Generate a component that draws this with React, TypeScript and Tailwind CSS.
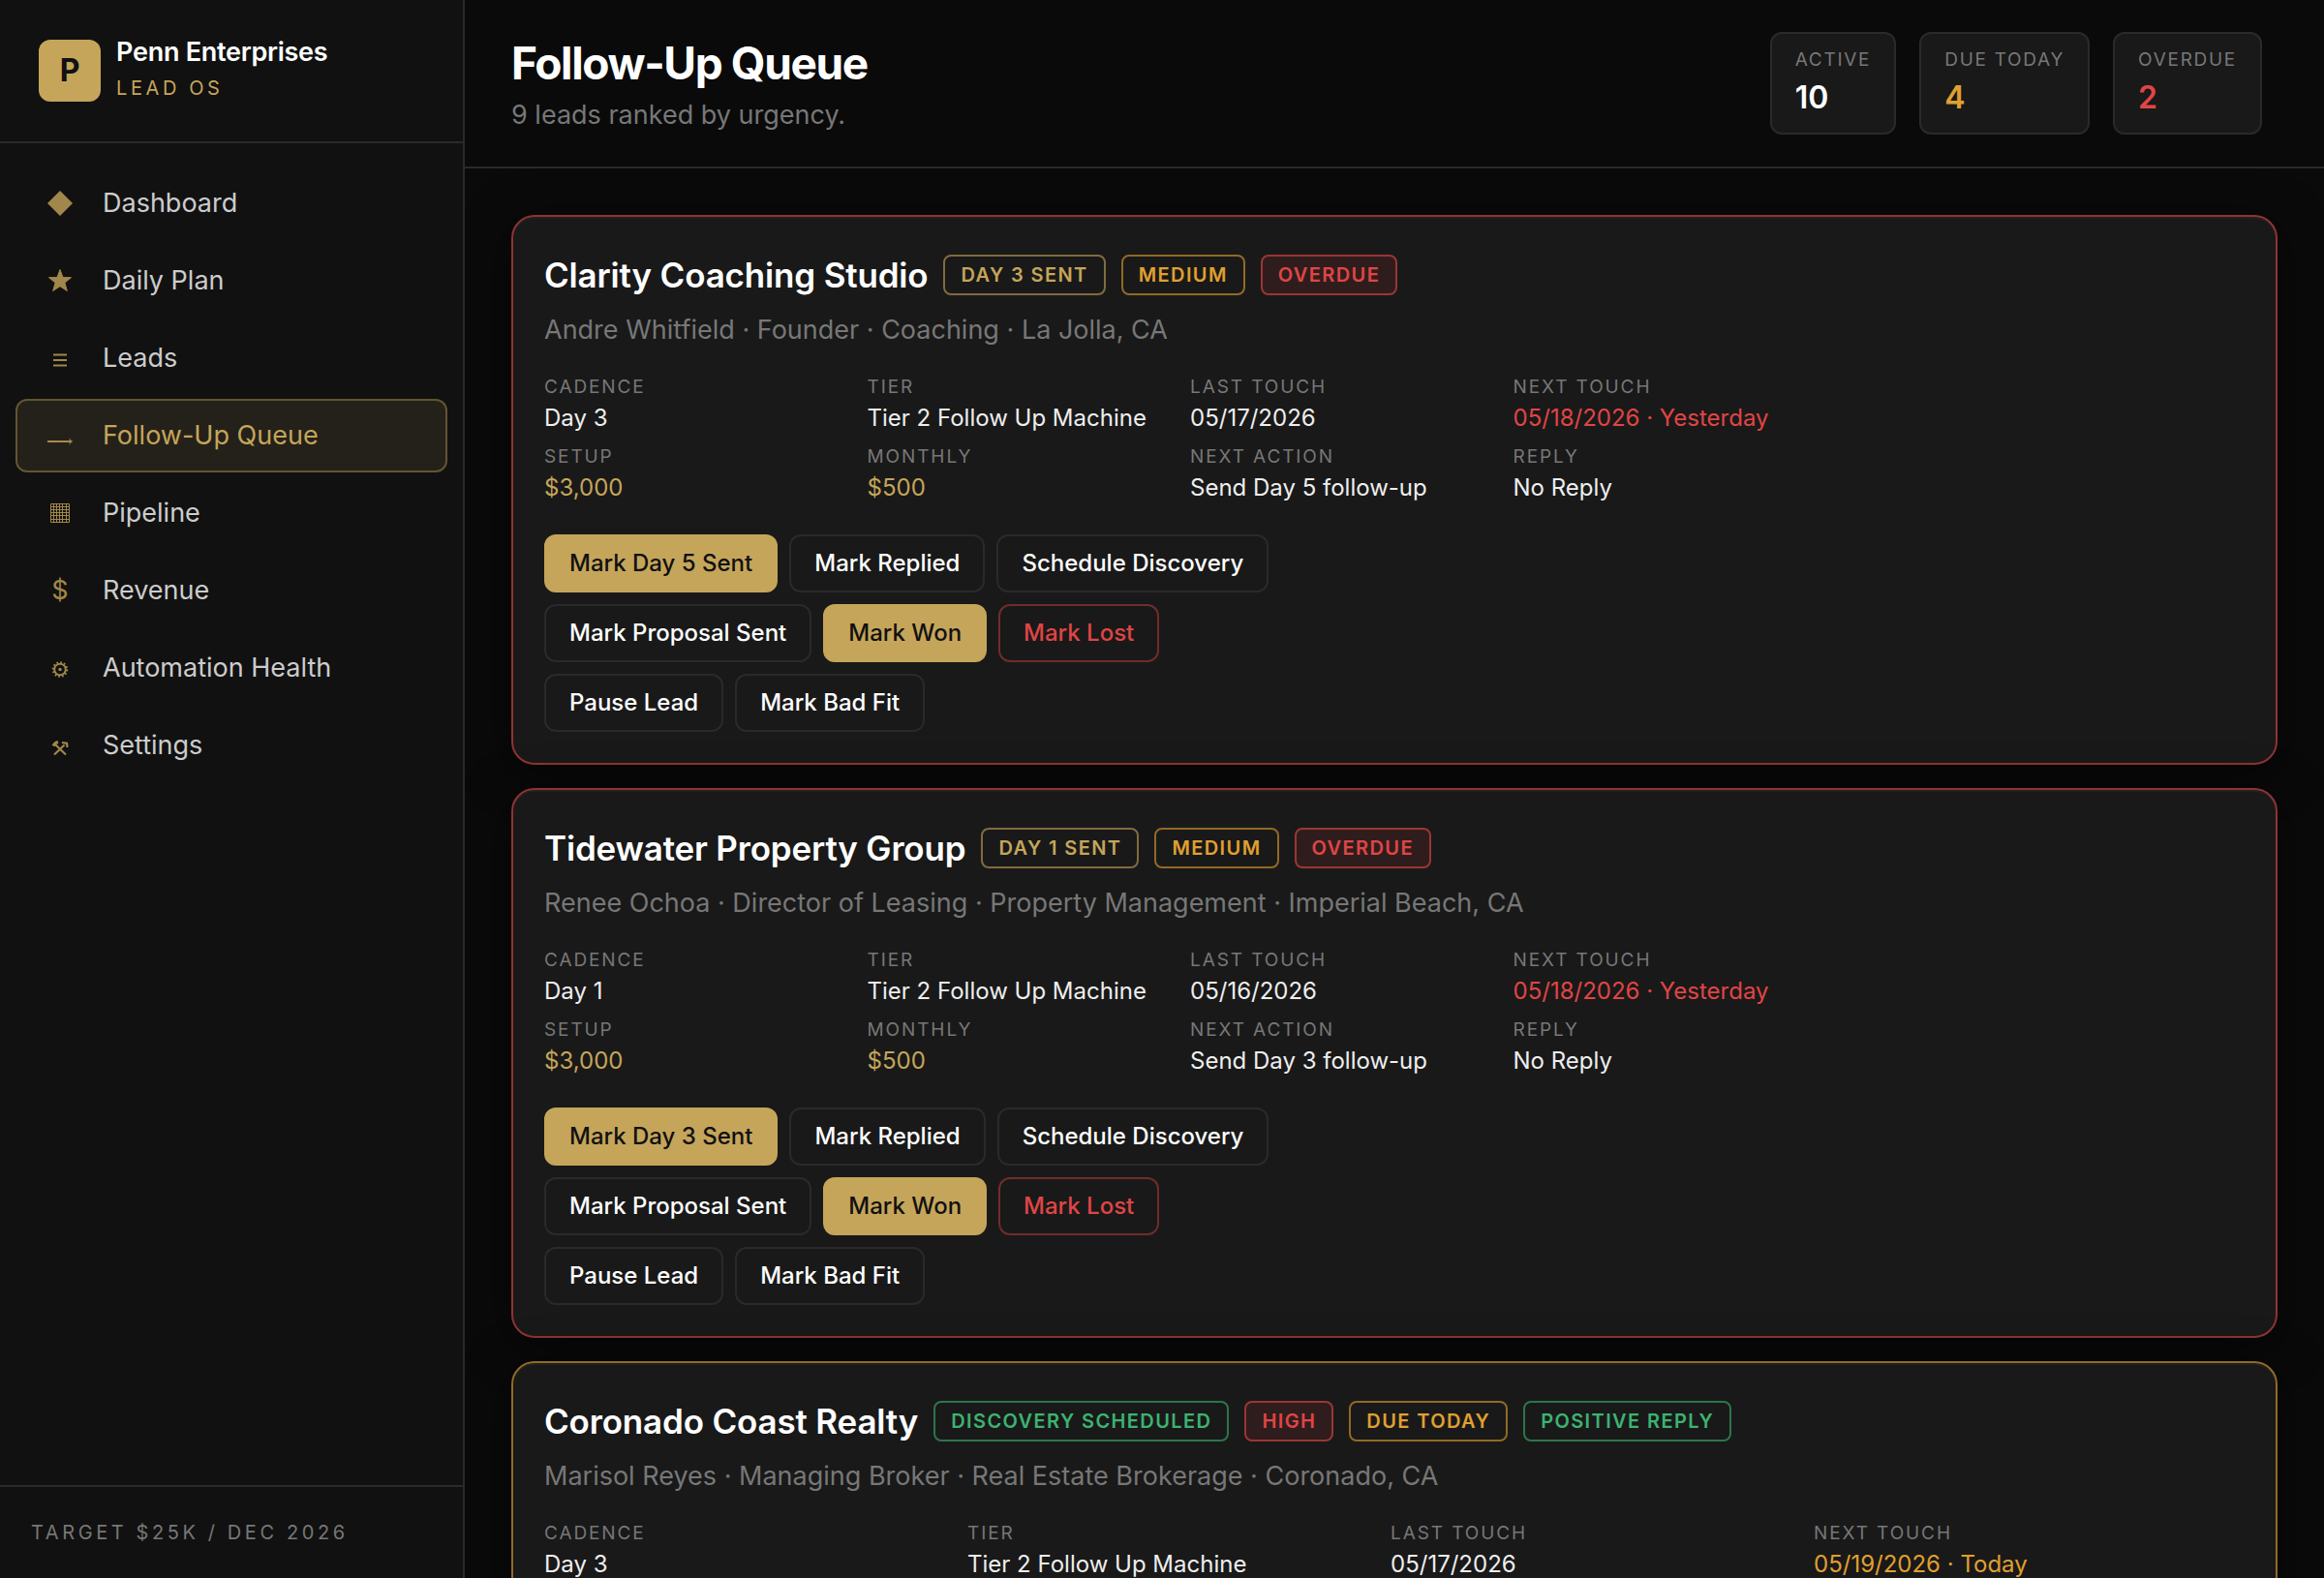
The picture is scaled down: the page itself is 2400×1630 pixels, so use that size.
import type { ReactNode } from "react";

type Tone = "gold" | "amber" | "red" | "green";
type ButtonKind = "primary" | "ghost" | "danger";

interface Badge {
  label: string;
  tone: Tone;
}

interface Detail {
  label: string;
  value: string;
  color?: string;
}

interface Lead {
  name: string;
  meta: string;
  badges: Badge[];
  details: Detail[];
  nextDay: string;
  border: string;
  gridWidth: string;
}

const navItems: { label: string; icon: ReactNode }[] = [
  { label: "Dashboard", icon: <path d="M20 7 33 20 20 33 7 20Z" fill="currentColor" /> },
  {
    label: "Daily Plan",
    icon: (
      <path
        d="M20 8.500 23 16.500 31.500 16.700 24.900 22 27.300 30.500 20 25.700 12.700 30.500 15.100 22 8.500 16.700 17 16.500Z"
        fill="currentColor"
        stroke="currentColor"
        strokeWidth="1"
        strokeLinejoin="round"
      />
    ),
  },
  {
    label: "Leads",
    icon: <path d="M13 16.500h14M13 22h14M13 27.500h14" stroke="currentColor" strokeWidth="2" />,
  },
  {
    label: "Follow-Up Queue",
    icon: (
      <>
        <path d="M7 26h23" stroke="currentColor" strokeWidth="2" />
        <path d="M29.500 22c.8 2 2 3.300 3.800 4-1.800.7-3 2-3.800 4l.5-4z" fill="currentColor" />
      </>
    ),
  },
  {
    label: "Pipeline",
    icon: (
      <path
        d="M10.500 10.500h19v19h-19zM13.500 10v20M16.500 10v20M19.500 10v20M22.500 10v20M26.500 10v20M10 13.500h20M10 16.500h20M10 19.500h20M10 22.500h20M10 26.500h20"
        stroke="currentColor"
        strokeWidth="1"
      />
    ),
  },
  { label: "Revenue", icon: null },
  {
    label: "Automation Health",
    icon: (
      <g stroke="currentColor">
        <circle cx="20" cy="21.500" r="5.800" strokeWidth="2" />
        <circle cx="20" cy="21.500" r="7.300" strokeWidth="2" strokeDasharray="1.700 2.122" />
        <circle cx="20" cy="21.500" r="1.700" fill="currentColor" stroke="none" />
      </g>
    ),
  },
  {
    label: "Settings",
    icon: (
      <g stroke="currentColor" strokeWidth="2.200">
        <path d="M15 19l11 10.500M24.500 19.500L14 29.500" />
        <path d="M13 20.500c1-2 2.500-3.500 5-4" strokeWidth="3" />
        <path d="M22 17l5 .8.500 4.200" />
      </g>
    ),
  },
];

const stats = [
  { label: "Active", value: "10", color: "text-white" },
  { label: "Due Today", value: "4", color: "text-[#e0a030]" },
  { label: "Overdue", value: "2", color: "text-[#e04545]" },
];

const leads: Lead[] = [
  {
    name: "Clarity Coaching Studio",
    meta: "Andre Whitfield · Founder · Coaching · La Jolla, CA",
    badges: [
      { label: "Day 3 Sent", tone: "gold" },
      { label: "Medium", tone: "amber" },
      { label: "Overdue", tone: "red" },
    ],
    details: [
      { label: "Cadence", value: "Day 3" },
      { label: "Tier", value: "Tier 2 Follow Up Machine" },
      { label: "Last Touch", value: "05/17/2026" },
      { label: "Next Touch", value: "05/18/2026 · Yesterday", color: "text-[#e04545]" },
      { label: "Setup", value: "$3,000", color: "text-[#c5a55a]" },
      { label: "Monthly", value: "$500", color: "text-[#c5a55a]" },
      { label: "Next Action", value: "Send Day 5 follow-up" },
      { label: "Reply", value: "No Reply" },
    ],
    nextDay: "Mark Day 5 Sent",
    border: "border-[#903333]",
    gridWidth: "max-w-[1310px]",
  },
  {
    name: "Tidewater Property Group",
    meta: "Renee Ochoa · Director of Leasing · Property Management · Imperial Beach, CA",
    badges: [
      { label: "Day 1 Sent", tone: "gold" },
      { label: "Medium", tone: "amber" },
      { label: "Overdue", tone: "red" },
    ],
    details: [
      { label: "Cadence", value: "Day 1" },
      { label: "Tier", value: "Tier 2 Follow Up Machine" },
      { label: "Last Touch", value: "05/16/2026" },
      { label: "Next Touch", value: "05/18/2026 · Yesterday", color: "text-[#e04545]" },
      { label: "Setup", value: "$3,000", color: "text-[#c5a55a]" },
      { label: "Monthly", value: "$500", color: "text-[#c5a55a]" },
      { label: "Next Action", value: "Send Day 3 follow-up" },
      { label: "Reply", value: "No Reply" },
    ],
    nextDay: "Mark Day 3 Sent",
    border: "border-[#903333]",
    gridWidth: "max-w-[1310px]",
  },
  {
    name: "Coronado Coast Realty",
    meta: "Marisol Reyes · Managing Broker · Real Estate Brokerage · Coronado, CA",
    badges: [
      { label: "Discovery Scheduled", tone: "green" },
      { label: "High", tone: "red" },
      { label: "Due Today", tone: "amber" },
      { label: "Positive Reply", tone: "green" },
    ],
    details: [
      { label: "Cadence", value: "Day 3" },
      { label: "Tier", value: "Tier 2 Follow Up Machine" },
      { label: "Last Touch", value: "05/17/2026" },
      { label: "Next Touch", value: "05/19/2026 · Today", color: "text-[#e0a030]" },
    ],
    nextDay: "Mark Day 5 Sent",
    border: "border-[#916a25]",
    gridWidth: "max-w-[1724px]",
  },
];

const badgeTones: Record<Tone, string> = {
  gold: "border-[#7f6c3f] text-[#c5a55a]",
  amber: "border-[#916a25] text-[#e0a030]",
  red: "border-[#9c3535] bg-[#2f1d1d] text-[#e04545]",
  green: "border-[#2d7549] text-[#3cb371]",
};

const buttonKinds: Record<ButtonKind, string> = {
  primary: "border-[#c5a55a] bg-[#c5a55a] text-[#111111]",
  ghost: "border-[#2a2a2a] text-white",
  danger: "border-[#702c2c] text-[#e04545]",
};

function Sidebar() {
  return (
    <aside className="flex w-[480px] shrink-0 flex-col border-r-2 border-[#2a2a2a] bg-[#111111]">
      <div className="flex items-center gap-4 border-b-2 border-[#2a2a2a] px-10 py-9">
        <div className="flex size-16 items-center justify-center rounded-xl bg-[#c5a55a] text-[32px] font-bold text-[#111111]">
          P
        </div>
        <div>
          <div className="text-[27px] leading-[36px] font-semibold tracking-[-0.01em] text-white">
            Penn Enterprises
          </div>
          <div className="text-[20px] leading-[38px] tracking-[0.18em] text-[#c5a55a] uppercase">Lead OS</div>
        </div>
      </div>

      <nav className="flex flex-1 flex-col gap-1 px-4 py-6">
        {navItems.map((item) => {
          const active = item.label === "Follow-Up Queue";
          return (
            <a
              key={item.label}
              href="#"
              aria-current={active ? "page" : undefined}
              className={`flex h-[76px] items-center gap-6 rounded-xl border-2 px-6 text-[27px] ${
                active
                  ? "border-[#645430] bg-[#24211a] text-[#c5a55a]"
                  : "border-transparent text-[#cccccc]"
              }`}
            >
              <span className="flex size-10 items-center justify-center text-[#c5a55a] opacity-80">
                {item.icon ? (
                  <svg viewBox="0 0 40 40" className="size-10" fill="none">
                    {item.icon}
                  </svg>
                ) : (
                  "$"
                )}
              </span>
              {item.label}
            </a>
          );
        })}
      </nav>

      <div className="border-t-2 border-[#2a2a2a] px-8 py-8 text-[20px] leading-[30px] tracking-[0.18em] text-[#777777] uppercase">
        Target $25K / Dec 2026
      </div>
    </aside>
  );
}

function LeadCard({ lead }: { lead: Lead }) {
  const actions: { label: string; kind: ButtonKind }[] = [
    { label: lead.nextDay, kind: "primary" },
    { label: "Mark Replied", kind: "ghost" },
    { label: "Schedule Discovery", kind: "ghost" },
    { label: "Mark Proposal Sent", kind: "ghost" },
    { label: "Mark Won", kind: "primary" },
    { label: "Mark Lost", kind: "danger" },
    { label: "Pause Lead", kind: "ghost" },
    { label: "Mark Bad Fit", kind: "ghost" },
  ];

  return (
    <article
      className={`shrink-0 rounded-3xl border-2 bg-[#191919] p-8 shadow-[0_8px_48px_rgba(0,0,0,0.5),inset_0_2px_0_rgba(255,255,255,0.03)] ${lead.border}`}
    >
      <div className="flex flex-wrap items-center gap-4">
        <h2 className="text-[35px] leading-[56px] font-semibold tracking-[-0.005em] text-white">{lead.name}</h2>
        {lead.badges.map((badge) => (
          <span
            key={badge.label}
            className={`rounded-lg border-2 px-4 text-[20px] leading-[38px] font-semibold tracking-[0.07em] uppercase ${badgeTones[badge.tone]}`}
          >
            {badge.label}
          </span>
        ))}
      </div>
      <p className="mt-2 text-[27px] leading-[42px] text-[#777777]">{lead.meta}</p>

      <dl className={`mt-6 grid grid-cols-4 gap-x-6 gap-y-2 ${lead.gridWidth}`}>
        {lead.details.map((detail) => (
          <div key={detail.label}>
            <dt className="text-[19px] leading-[28px] tracking-[0.1em] text-[#777777] uppercase">
              {detail.label}
            </dt>
            <dd className={`text-[24px] leading-[36px] ${detail.color ?? "text-[#eeeeee]"}`}>{detail.value}</dd>
          </div>
        ))}
      </dl>

      <div className="mt-[30px] flex max-w-[760px] flex-wrap gap-3">
        {actions.map((action) => (
          <button
            key={action.label}
            type="button"
            className={`h-[60px] rounded-xl border-2 px-6 text-[24px] font-medium ${buttonKinds[action.kind]}`}
          >
            {action.label}
          </button>
        ))}
      </div>
    </article>
  );
}

export default function App() {
  return (
    <div className="flex h-screen overflow-hidden bg-[#0a0a0a] font-['Inter',sans-serif]">
      <Sidebar />

      <main className="flex min-w-0 flex-1 flex-col">
        <header className="flex items-center justify-between border-b-2 border-[#2a2a2a] py-8 pr-16 pl-12">
          <div>
            <h1 className="text-[46px] leading-[66px] font-bold tracking-[-0.03em] text-white">Follow-Up Queue</h1>
            <p className="text-[27px] leading-[42px] text-[#777777]">9 leads ranked by urgency.</p>
          </div>
          <div className="flex gap-6">
            {stats.map((stat) => (
              <div key={stat.label} className="rounded-xl border-2 border-[#2a2a2a] bg-[#191919] px-6 py-3">
                <div className="text-[19px] leading-[30px] tracking-[0.09em] text-[#777777] uppercase">
                  {stat.label}
                </div>
                <div className={`text-[32px] leading-[48px] font-semibold ${stat.color}`}>{stat.value}</div>
              </div>
            ))}
          </div>
        </header>

        <div className="flex min-h-0 flex-1 flex-col gap-6 overflow-hidden p-12">
          {leads.map((lead) => (
            <LeadCard key={lead.name} lead={lead} />
          ))}
        </div>
      </main>
    </div>
  );
}
